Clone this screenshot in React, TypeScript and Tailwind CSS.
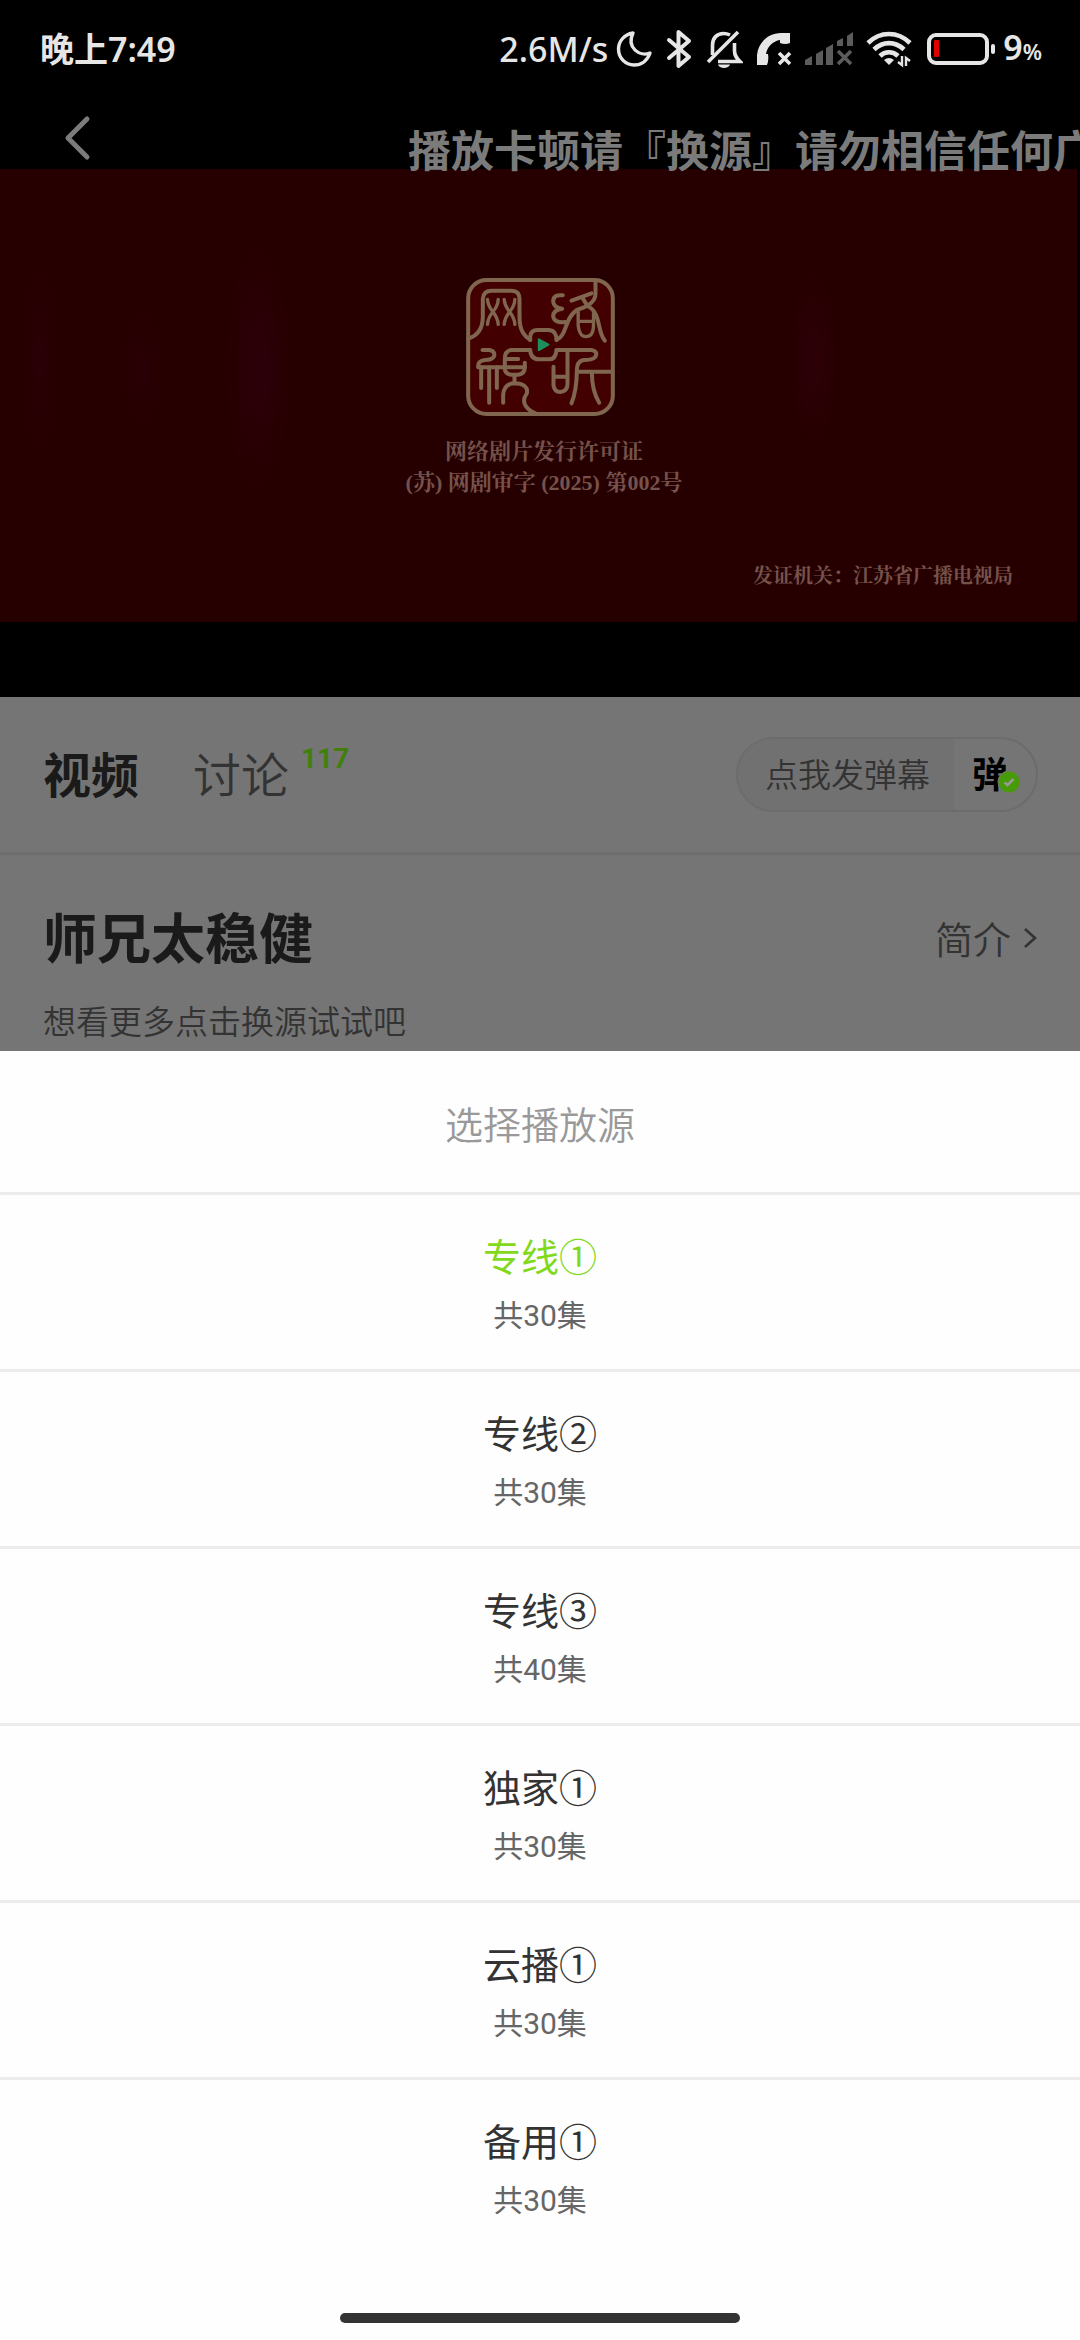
import React from 'react';

interface PlaySource {
  id: string;
  name: string;
  episodes: number;
}

const SOURCES: PlaySource[] = [
  { id: 'line-1', name: '专线①', episodes: 30 },
  { id: 'line-2', name: '专线②', episodes: 30 },
  { id: 'line-3', name: '专线③', episodes: 40 },
  { id: 'solo-1', name: '独家①', episodes: 30 },
  { id: 'cloud-1', name: '云播①', episodes: 30 },
  { id: 'spare-1', name: '备用①', episodes: 30 },
];

const MoonIcon = () => (
  <svg width="37" height="38" viewBox="0 0 37 38" fill="none" stroke="currentColor" strokeWidth="3.4" strokeLinejoin="round">
    <path d="M17 3C8 4.500 2.500 11.500 2.500 19C2.500 28 9.500 35 18 35C25.500 35 31.500 30.500 34 23C24 27 10 18 17 3Z" />
  </svg>
);

const BluetoothIcon = () => (
  <svg width="27" height="40" viewBox="0 0 27 40" fill="none" stroke="currentColor" strokeWidth="4" strokeLinejoin="round" strokeLinecap="round">
    <path d="M3 11L23 28L12.500 37V3L23 12L3 29" />
  </svg>
);

const BellOffIcon = () => (
  <svg width="37" height="38" viewBox="0 0 37 38" fill="none" stroke="currentColor" strokeWidth="3.6">
    <path d="M6.500 25V15C6.500 8 11 3.500 17.500 3.500C20 3.500 22 4 24 5" />
    <path d="M28.500 13V21C28.500 26 31 28.500 34 31.500H12" />
    <path d="M32 2L2 32" />
    <path d="M12 34.500H24C23 39 13 39 12 34.500Z" fill="currentColor" stroke="none" />
  </svg>
);

const PhoneMissedIcon = () => (
  <svg width="36" height="36" viewBox="0 0 36 36">
    <path
      d="M1 34V24C2 12 12 2 25 2H34V12Q29 14 24 12V9C17 10 11 16 10 23H12Q13 29 11 34Z"
      fill="currentColor"
    />
    <path d="M23 22L34 33M34 22L23 33" stroke="currentColor" strokeWidth="3.600" />
  </svg>
);

const SignalIcon = () => (
  <svg width="48" height="34" viewBox="0 0 48 34" fill="#5c5c5c">
    <path d="M0 28L7 24V33H0Z" />
    <path d="M11 22L18 18V33H11Z" />
    <path d="M21 16L28 12V33H21Z" />
    <path d="M32 9L38 6V14H32Z" />
    <path d="M42 4L48 0V14H42Z" />
    <path d="M33 19L46 32M46 19L33 32" stroke="#5c5c5c" strokeWidth="3.600" />
  </svg>
);

const WifiIcon = () => (
  <svg width="48" height="38" viewBox="0 0 48 38" fill="none" stroke="currentColor" strokeWidth="4.600">
    <path d="M2 13C14 1 32 1 44 13" />
    <path d="M8 19.500C17 11 29 11 38 19.500" />
    <path d="M14 26C19 21 27 21 32 26" />
    <path d="M18 30Q23 26 28 30L23 35Z" fill="currentColor" stroke="none" />
    <path d="M36 26V35L32 32M40 36V28L44 31" strokeWidth="2.400" />
  </svg>
);

const BatteryIcon = () => (
  <svg width="68" height="32" viewBox="0 0 68 32" fill="none">
    <rect x="2" y="2" width="58" height="28" rx="7" stroke="currentColor" strokeWidth="4" />
    <rect x="7" y="7" width="5" height="17" rx="1" fill="#e00000" />
    <rect x="64" y="11" width="4" height="10" rx="2" fill="currentColor" />
  </svg>
);

const StatusBar = () => (
  <div className="flex h-[98px] items-center justify-between pl-10 pr-[38px] font-['Noto_Sans','Noto_Sans_CJK_SC',sans-serif] text-[#e6e6e6]">
    <span className="text-[34px] font-semibold leading-[48px]">晚上7:49</span>
    <div className="flex items-center gap-[13px]">
      <div className="flex items-center gap-2">
        <span className="text-[34px] font-medium leading-[48px]">2.6M/s</span>
        <MoonIcon />
      </div>
      <BluetoothIcon />
      <BellOffIcon />
      <PhoneMissedIcon />
      <SignalIcon />
      <WifiIcon />
      <div className="flex items-center gap-2">
        <BatteryIcon />
        <span className="text-[34px] font-semibold leading-[48px]">
          9<span className="text-[22px]">%</span>
        </span>
      </div>
    </div>
  </div>
);

const LicenseSeal = () => (
  <svg width="149" height="138" viewBox="76 54 446 414" fill="none" stroke="#80654f" strokeWidth="12" strokeLinecap="round" strokeLinejoin="round">
    <rect x="82" y="60" width="434" height="402" rx="55" fill="#430000" />
    <path d="M82 236C112 226 126 205 126 170V116Q128 92 152 92H212Q236 92 236 116V170C236 215 252 228 268 240" />
    <path d="M140 118C142 155 170 155 172 193M172 118C172 155 142 155 140 193M190 118C192 155 220 155 222 193M222 118C222 155 192 155 190 193" strokeWidth="10" />
    <path d="M268 240V230Q270 210 290 210H325Q347 212 347 240" />
    <path d="M268 270Q270 298 295 298H325Q345 298 347 270" />
    <path d="M366 106Q337 102 337 125Q339 143 364 146Q337 150 337 168Q339 190 374 186" />
    <path d="M347 240C380 225 370 175 408 150C445 138 464 125 464 100V62" />
    <path d="M392 122L452 100M424 112L440 138C482 158 468 215 492 242" />
    <path d="M412 156V196Q416 230 435 230Q458 230 458 196V160M412 184H458" strokeWidth="10" />
    <path d="M125 270H146Q163 274 160 288Q155 300 132 300Q110 302 112 322H252" />
    <path d="M121 322V384M145 322V428M168 322V384" />
    <path d="M268 270H212Q192 272 192 296V328Q194 344 212 344H232Q252 342 252 322V308M200 297H232" />
    <path d="M221 344V368M187 428V404Q190 370 222 370Q264 372 258 400C236 430 262 452 288 462" />
    <path d="M338 320V376Q341 396 358 396Q380 394 380 372V270M338 350H380" />
    <path d="M347 270H452Q472 274 464 290Q456 300 428 300Q408 304 408 330C408 370 404 400 392 430" />
    <path d="M410 335H514M453 335C453 370 458 400 475 428" />
    <path d="M294 238L323 254L294 270Z" fill="#1f8f5c" stroke="#1f8f5c" strokeWidth="6" />
  </svg>
);

const Player = () => (
  <section className="relative bg-black pb-[75px]">
    <StatusBar />
    <div className="h-[71px] pl-[54px]">
      <button type="button" aria-label="返回" className="flex h-20 w-12 items-start justify-center pt-[17px] text-[#7b7b7b]">
        <svg width="28" height="46" viewBox="0 0 28 46" fill="none" stroke="currentColor" strokeWidth="5" strokeLinecap="round" strokeLinejoin="round">
          <path d="M23 4L4 23L23 42" />
        </svg>
      </button>
    </div>
    <p className="absolute left-[408px] right-0 top-[127px] overflow-hidden whitespace-nowrap text-[43px] font-bold leading-[50px] text-[#7b7b7b]">
      播放卡顿请『换源』请勿相信任何广
    </p>
    <div className="mr-[3px] flex h-[453px] flex-col items-center bg-[#260000] bg-[radial-gradient(ellipse_34px_130px_at_258px_200px,#2d000a,transparent),radial-gradient(ellipse_24px_90px_at_814px_190px,#2e0009,transparent),radial-gradient(ellipse_24px_110px_at_40px_190px,#290006,transparent),radial-gradient(ellipse_24px_70px_at_142px_200px,#290006,transparent)] pl-[3px] pt-[109px] font-['Liberation_Serif','Noto_Serif_CJK_SC','Noto_Sans_CJK_SC',serif] font-bold text-[#75524b]">
      <LicenseSeal />
      <p className="mt-5 pl-2 text-[22px] leading-[31px]">网络剧片发行许可证</p>
      <p className="pl-2 text-[22px] leading-[31px]">(苏) 网剧审字 (2025) 第002号</p>
      <p className="mt-16 self-end pr-[64px] text-[20px] leading-7">发证机关：江苏省广播电视局</p>
    </div>
  </section>
);

const TabRow = () => (
  <div className="flex h-[158px] items-center justify-between border-b-3 border-[#6e6e6e] pl-[43px] pr-[42px]">
    <div className="flex items-center gap-[54px] pt-1">
      <button type="button" className="text-[48px] font-bold leading-[60px] text-[#1a1a1a]">
        视频
      </button>
      <button type="button" className="flex items-start gap-3 text-[48px] font-[350] leading-[60px] text-[#333333]">
        讨论
        <span className="text-[28px] font-bold leading-[24px] text-[#417f0d]">117</span>
      </button>
    </div>
    <div className="flex h-[75px] overflow-hidden rounded-full border-2 border-[#6c6c6c]">
      <button type="button" className="bg-[#717171] pl-[27px] pr-6 pt-[3px] text-[33px] font-[350] text-[#333333]">
        点我发弹幕
      </button>
      <button type="button" aria-label="弹幕开关" className="relative w-[82px] pl-[18px] pt-[3px] text-left text-[36px] font-bold text-black">
        弹
        <svg className="absolute left-[43px] top-[31px]" width="24" height="24" viewBox="0 0 24 24" fill="none">
          <circle cx="12" cy="12" r="11" fill="#479b09" stroke="#757575" strokeWidth="1" />
          <path d="M7.500 12.500L10.500 15L16.500 9" stroke="#999999" strokeWidth="2.500" />
        </svg>
      </button>
    </div>
  </div>
);

const ShowInfo = () => (
  <div className="h-[196px] pl-[43px] pr-[42px] pt-[51px]">
    <div className="flex items-center justify-between">
      <h1 className="text-[54px] font-bold leading-[70px] text-[#1a1a1a]">师兄太稳健</h1>
      <button type="button" className="flex items-center gap-[11px] text-[38px] font-[350] leading-[70px] text-[#333333]">
        简介
        <svg width="16" height="30" viewBox="0 0 16 30" fill="none" stroke="currentColor" strokeWidth="2.600">
          <path d="M3 3L13 12L3 21" />
        </svg>
      </button>
    </div>
    <p className="mt-5 text-[33px] font-[350] leading-[54px] text-[#333333]">想看更多点击换源试试吧</p>
  </div>
);

interface SourceRowProps {
  source: PlaySource;
  active: boolean;
  onSelect: (id: string) => void;
}

const SourceRow: React.FC<SourceRowProps> = ({ source, active, onSelect }) => (
  <li className="border-t-3 border-[#ececec]">
    <button
      type="button"
      aria-pressed={active}
      onClick={() => onSelect(source.id)}
      className="flex h-[174px] w-full flex-col items-center pt-[36px]"
    >
      <span className={active ? 'text-[38px] leading-[54px] text-[#82d91c]' : 'text-[38px] leading-[54px] text-[#333333]'}>
        {source.name}
      </span>
      <span className="mt-2 text-[30px] leading-[46px] text-[#666666]">共{source.episodes}集</span>
    </button>
  </li>
);

export default function App() {
  const [selected, setSelected] = React.useState('line-1');

  return (
    <div className="flex min-h-screen flex-col bg-[#757575] font-['Roboto','Noto_Sans_CJK_SC',sans-serif]">
      <Player />
      <TabRow />
      <ShowInfo />
      <section className="flex flex-1 flex-col bg-[#fefefe]">
        <h2 className="h-[141px] pt-[48px] text-center text-[38px] font-[350] leading-[54px] text-[#999999]">选择播放源</h2>
        <ul>
          {SOURCES.map((source) => (
            <SourceRow key={source.id} source={source} active={source.id === selected} onSelect={setSelected} />
          ))}
        </ul>
        <div className="mx-auto mb-[17px] mt-auto h-[10px] w-[37%] rounded-full bg-[#333333]" />
      </section>
    </div>
  );
}
